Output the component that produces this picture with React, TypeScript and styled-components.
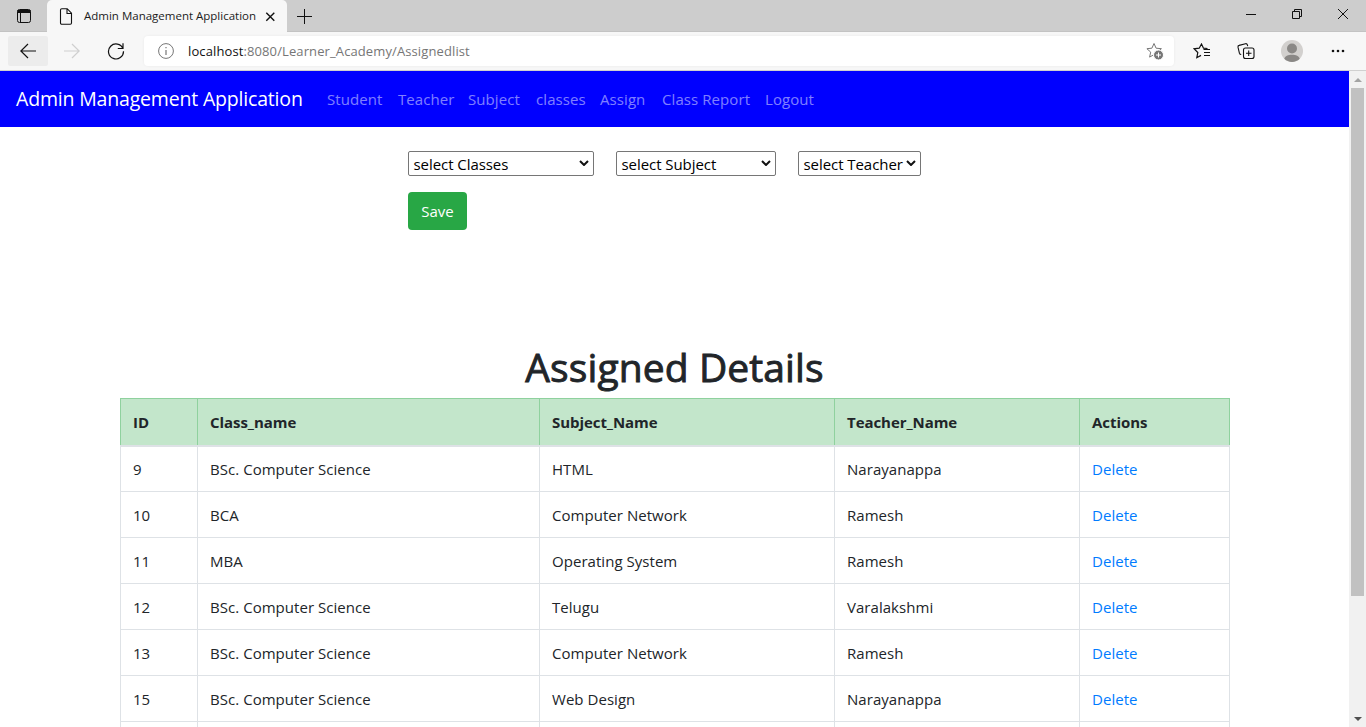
import React from "react";
import styled, { createGlobalStyle } from "styled-components";

const GlobalStyle = createGlobalStyle`
  *, *::before, *::after { box-sizing: border-box; }
  body {
    margin: 0;
    overflow: hidden;
    background: #fff;
    color: #212529;
    font-family: "Open Sans", "Noto Sans", sans-serif;
    font-size: 15px;
    line-height: 24px;
  }
  button { font: inherit; letter-spacing: inherit; }
`;

const Window = styled.div`
  display: flex;
  flex-direction: column;
  width: 1366px;
  height: 727px;
  overflow: hidden;
`;

const TabStrip = styled.div`
  display: flex;
  flex: none;
  height: 32px;
  background: #cdcdcd;
  box-shadow: inset 0 -1px 0 #c3c3c3;
`;

const TabActions = styled.div`
  display: flex;
  align-items: center;
  justify-content: center;
  width: 47px;
`;

const Tab = styled.div`
  display: flex;
  align-items: center;
  width: 240px;
  padding-left: 11px;
  border-radius: 5px 5px 0 0;
  background: #f7f7f7;
`;

const TabTitle = styled.span`
  width: 178px;
  margin-left: 9px;
  color: #1b1b1b;
  font-size: 11.5px;
  line-height: 16px;
  white-space: nowrap;
`;

const NewTab = styled.div`
  display: flex;
  align-items: center;
  margin-left: 10px;
`;

const Captions = styled.div`
  display: flex;
  align-items: center;
  margin-left: auto;
  padding: 0 16px 4px 0;
  gap: 32px;
`;

const Toolbar = styled.div`
  display: flex;
  flex: none;
  align-items: center;
  height: 39px;
  padding: 0 0 1px 8px;
  border-bottom: 1px solid #d0d0d0;
  background: #f7f7f7;
`;

const ToolButton = styled.span<{ $width: number; $active?: boolean }>`
  display: flex;
  align-items: center;
  justify-content: center;
  width: ${(p) => p.$width}px;
  height: 30px;
  border-radius: 2px;
  background: ${(p) => (p.$active ? "#ececec" : "transparent")};
`;

const AddressBar = styled.div`
  display: flex;
  align-items: center;
  width: 1030px;
  height: 30px;
  margin-left: 8px;
  padding: 0 10px 0 14px;
  border-radius: 4px;
  background: #fff;
  box-shadow: 0 0 3px rgba(0, 0, 0, 0.06);
`;

const Url = styled.span`
  flex: 1;
  margin-left: 14px;
  color: #767676;
  font-size: 13px;
  letter-spacing: 0.11px;
  line-height: 20px;
`;

const Host = styled.span`
  color: #111;
`;

const Viewport = styled.div`
  display: flex;
  flex: 1;
  min-height: 0;
`;

const Page = styled.main`
  width: 1349px;
  overflow: hidden;
`;

const Navbar = styled.nav`
  display: flex;
  align-items: center;
  height: 56px;
  padding: 0 16px;
  background: #0000ff;
`;

const Brand = styled.span`
  width: 303px;
  color: #fff;
  font-size: 19.5px;
  letter-spacing: -0.18px;
  line-height: 30px;
  white-space: nowrap;
`;

const NavLink = styled.a<{ $width: number }>`
  width: ${(p) => p.$width}px;
  padding: 0 8px;
  color: rgba(255, 255, 255, 0.5);
  letter-spacing: 0.08px;
  white-space: nowrap;
`;

const Form = styled.form`
  display: flex;
  flex-direction: column;
  align-items: flex-start;
  gap: 16px;
  margin: 24px 0 0 408px;
`;

const Fields = styled.div`
  display: flex;
  gap: 22px;
`;

const SelectBox = styled.button<{ $width: number }>`
  display: flex;
  align-items: center;
  justify-content: space-between;
  width: ${(p) => p.$width}px;
  height: 25px;
  padding: 2px 4px 0 4.5px;
  border: 1px solid #767676;
  border-radius: 2px;
  background: #fff;
  color: #000;
  letter-spacing: -0.06px;
  line-height: 21px;
  white-space: nowrap;

  svg { margin-top: -4px; flex: none; }
`;

const SaveButton = styled.button`
  width: 59px;
  height: 38px;
  padding: 0;
  border: 0;
  border-radius: 4px;
  background: #28a745;
  color: #fff;
`;

const Title = styled.h1`
  margin: 113px 0 7px;
  font-size: 39px;
  font-weight: 500;
  letter-spacing: 0.1px;
  line-height: 48px;
  text-align: center;
  -webkit-text-stroke: 0.9px currentColor;
`;

const Table = styled.table`
  width: 1110px;
  margin-left: 120px;
  border-collapse: collapse;
  table-layout: fixed;
`;

const HeadCell = styled.th<{ $width: number }>`
  width: ${(p) => p.$width}px;
  height: 47px;
  padding: 1px 12px 0;
  border: 1px solid #8fd19e;
  border-bottom: 2px solid #dee2e6;
  background: #c3e6cb;
  font-weight: 700;
  letter-spacing: -0.06px;
  text-align: left;
`;

const Cell = styled.td`
  height: 46px;
  padding: 1px 12px 0;
  border: 1px solid #dee2e6;
  letter-spacing: 0.04px;
  white-space: nowrap;
`;

const DeleteLink = styled.a`
  color: #007bff;
`;

const Scrollbar = styled.div`
  display: flex;
  flex-direction: column;
  align-items: center;
  width: 17px;
  background: #f1f1f1;
`;

const ScrollArrow = styled.span`
  display: flex;
  align-items: center;
  justify-content: center;
  height: 17px;
`;

const Thumb = styled.span`
  width: 13px;
  height: 508px;
  margin-bottom: auto;
  background: #c1c1c1;
`;

const Chevron = () => (
  <svg width="10" height="6" viewBox="0 0 10 6" fill="none" stroke="#111" strokeWidth="2">
    <path d="M1 1l4 4 4-4" />
  </svg>
);

const navItems: [string, number][] = [
  ["Student", 71],
  ["Teacher", 70],
  ["Subject", 68],
  ["classes", 64],
  ["Assign", 62],
  ["Class Report", 103],
  ["Logout", 66],
];

const columns: [string, number][] = [
  ["ID", 77],
  ["Class_name", 342],
  ["Subject_Name", 295],
  ["Teacher_Name", 245],
  ["Actions", 150],
];

const rows = [
  ["9", "BSc. Computer Science", "HTML", "Narayanappa"],
  ["10", "BCA", "Computer Network", "Ramesh"],
  ["11", "MBA", "Operating System", "Ramesh"],
  ["12", "BSc. Computer Science", "Telugu", "Varalakshmi"],
  ["13", "BSc. Computer Science", "Computer Network", "Ramesh"],
  ["15", "BSc. Computer Science", "Web Design", "Narayanappa"],
  ["", "", "", ""],
];

export default function App() {
  return (
    <>
      <GlobalStyle />
      <Window>
        <TabStrip>
          <TabActions>
            <svg width="16" height="16" viewBox="0 0 16 16" fill="none" stroke="#111">
              <rect x="1.5" y="1.5" width="13" height="13" rx="2" />
              <path d="M1.5 3.5h13" strokeWidth="3" />
              <path d="M4.5 4v10" />
            </svg>
          </TabActions>
          <Tab>
            <svg width="17" height="17" viewBox="0 0 17 17" fill="none" stroke="#111" strokeWidth="1.1">
              <path d="M2.5 2c0-.8.5-1.3 1.3-1.3h5.4l4.3 4.5V15c0 .7-.5 1.2-1.2 1.2H3.7c-.7 0-1.2-.5-1.2-1.2zM9 .8v4.7h4.5" />
            </svg>
            <TabTitle>Admin Management Application</TabTitle>
            <svg width="16" height="16" viewBox="0 0 16 16" stroke="#111" strokeWidth="1.4">
              <path d="M4.3 4.8l8 8M12.3 4.8l-8 8" />
            </svg>
          </Tab>
          <NewTab>
            <svg width="15" height="15" viewBox="0 0 15 15" stroke="#111">
              <path d="M7.5 0v15M0 7.5h15" />
            </svg>
          </NewTab>
          <Captions>
            <svg width="14" height="14" viewBox="0 0 14 14" stroke="#111">
              <path d="M2 7.5h10" />
            </svg>
            <svg width="14" height="14" viewBox="0 0 14 14" fill="none" stroke="#111">
              <path d="M2.5 4.5h7v7h-7zM4.5 4.5v-2h7v7h-2" />
            </svg>
            <svg width="14" height="14" viewBox="0 0 14 14" stroke="#111">
              <path d="M2 2l10 10M12 2L2 12" />
            </svg>
          </Captions>
        </TabStrip>
        <Toolbar>
          <ToolButton $width={40} $active>
            <svg width="16" height="16" viewBox="0 0 16 16" fill="none" stroke="#111" strokeWidth="1.2">
              <path d="M16 8H.8M8 1L.8 8 8 15" />
            </svg>
          </ToolButton>
          <ToolButton $width={48}>
            <svg width="16" height="16" viewBox="0 0 16 16" fill="none" stroke="#cfcfcf" strokeWidth="1.2">
              <path d="M0 8h15.2M8 1l7.2 7L8 15" />
            </svg>
          </ToolButton>
          <ToolButton $width={40}>
            <svg width="18" height="18" viewBox="0 0 18 18" fill="none" stroke="#111" strokeWidth="1.2">
              <path d="M15.9 6.500A7.500 7.500 0 1 0 16.500 9.300M16 1.300v5.200h-5.200" />
            </svg>
          </ToolButton>
          <AddressBar>
            <svg width="16" height="16" viewBox="0 0 16 16" fill="none" stroke="#767676">
              <circle cx="8" cy="8" r="7.400" />
              <path d="M8 7v5M8 4v1.300" strokeWidth="1.200" />
            </svg>
            <Url>
              <Host>localhost</Host>:8080/Learner_Academy/Assignedlist
            </Url>
            <svg width="18" height="18" viewBox="0 0 18 18" fill="none" stroke="#767676">
              <path d="M8 1.500l2.100 4.700 5.300.500-4 3.400 1.100 5L8 12.600l-4.400 2.500 1.100-5L.900 6.700l5-.500z" />
              <circle cx="12.500" cy="13" r="5" fill="#767676" stroke="#fff" />
              <path d="M12.500 10.500v5M10 13h5" stroke="#fff" />
            </svg>
          </AddressBar>
          <ToolButton $width={56}>
            <svg width="18" height="16" viewBox="0 0 18 16" fill="none" stroke="#111" strokeWidth="1.200">
              <path d="M14.500 5.500l-4-.300L8.500 1 6.200 5.200 1.200 5.800l3.600 3.700-1 5.200L8 12.400M10.500 6.500H17M11 9.500h6M11 12.500h6" />
            </svg>
          </ToolButton>
          <ToolButton $width={32}>
            <svg width="18" height="18" viewBox="0 0 18 18" fill="none" stroke="#111" strokeWidth="1.100">
              <path d="M4.200 12.500c-1 0-1.500-.500-1.800-1.300L1 5.200C.800 4.200 1.200 3.600 2.100 3.400L8.500 1.700c1-.200 1.600.200 1.900 1.200l.300 1.200" />
              <rect x="6.500" y="6" width="10.500" height="10.500" rx="2" />
              <path d="M11.700 8.500V14M9 11.200h5.500" />
            </svg>
          </ToolButton>
          <ToolButton $width={60}>
            <svg width="22" height="22" viewBox="0 0 22 22">
              <circle cx="11" cy="11" r="11" fill="#d2d0ce" />
              <circle cx="11" cy="8.500" r="5" fill="#8a8886" />
              <path d="M3.300 18.800C4 15.800 7 14.700 11 14.700s7 1.100 7.700 4.100A11 11 0 0 1 3.300 18.800z" fill="#8a8886" />
            </svg>
          </ToolButton>
          <ToolButton $width={32}>
            <svg width="14" height="4" viewBox="0 0 14 4" fill="#111">
              <circle cx="2" cy="2" r="1.300" />
              <circle cx="7" cy="2" r="1.300" />
              <circle cx="12" cy="2" r="1.300" />
            </svg>
          </ToolButton>
        </Toolbar>
        <Viewport>
          <Page>
            <Navbar>
              <Brand>Admin Management Application</Brand>
              {navItems.map(([label, width]) => (
                <NavLink key={label} $width={width}>
                  {label}
                </NavLink>
              ))}
            </Navbar>
            <Form>
              <Fields>
                <SelectBox type="button" $width={186}>select Classes<Chevron /></SelectBox>
                <SelectBox type="button" $width={160}>select Subject<Chevron /></SelectBox>
                <SelectBox type="button" $width={123}>select Teacher<Chevron /></SelectBox>
              </Fields>
              <SaveButton type="button">Save</SaveButton>
            </Form>
            <Title>Assigned Details</Title>
            <Table>
              <thead>
                <tr>
                  {columns.map(([label, width]) => (
                    <HeadCell key={label} $width={width}>{label}</HeadCell>
                  ))}
                </tr>
              </thead>
              <tbody>
                {rows.map((row, i) => (
                  <tr key={i}>
                    {row.map((value, j) => (
                      <Cell key={j}>{value}</Cell>
                    ))}
                    <Cell>{row[0] && <DeleteLink>Delete</DeleteLink>}</Cell>
                  </tr>
                ))}
              </tbody>
            </Table>
          </Page>
          <Scrollbar>
            <ScrollArrow>
              <svg width="8" height="4" viewBox="0 0 8 4" fill="#a3a3a3"><path d="M0 4l4-4 4 4z" /></svg>
            </ScrollArrow>
            <Thumb />
            <ScrollArrow>
              <svg width="8" height="4" viewBox="0 0 8 4" fill="#505050"><path d="M0 0h8L4 4z" /></svg>
            </ScrollArrow>
          </Scrollbar>
        </Viewport>
      </Window>
    </>
  );
}
